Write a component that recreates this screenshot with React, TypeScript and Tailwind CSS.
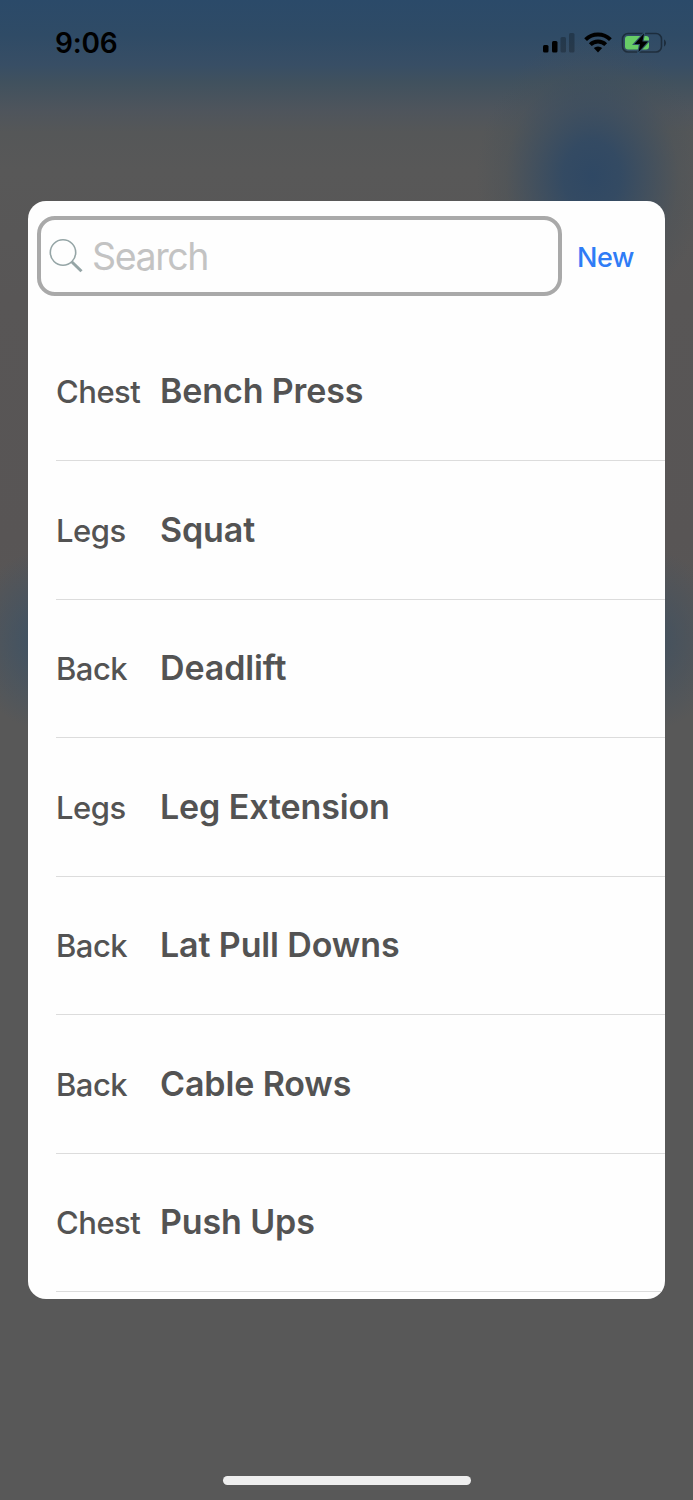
interface Exercise {
  group: string;
  name: string;
}

const exercises: Exercise[] = [
  { group: "Chest", name: "Bench Press" },
  { group: "Legs", name: "Squat" },
  { group: "Back", name: "Deadlift" },
  { group: "Legs", name: "Leg Extension" },
  { group: "Back", name: "Lat Pull Downs" },
  { group: "Back", name: "Cable Rows" },
  { group: "Chest", name: "Push Ups" },
];

function StatusBar() {
  return (
    <div className="flex h-[200px] items-start justify-between pt-[27px] pl-[55px] pr-[26px] text-black">
      <span className="text-[28px] leading-[32px] font-semibold tracking-[-0.2px]">9:06</span>
      <svg className="mt-[4px]" width="124" height="24" viewBox="0 0 124 24">
        {/* Signal */}
        <rect x="0" y="14" width="5.5" height="7.5" rx="1.5" />
        <rect x="9" y="10" width="5.5" height="11.5" rx="1.5" />
        <rect x="17.5" y="6" width="5.5" height="15.5" rx="1.5" opacity="0.25" />
        <rect x="26" y="2" width="5.5" height="19.5" rx="1.5" opacity="0.25" />
        {/* Wifi */}
        <g fill="none" stroke="#000" strokeWidth="4">
          <path d="M42.6 8.6a17.8 17.8 0 0 1 24.8 0" />
          <path d="M47.3 13.6a11 11 0 0 1 15.4 0" />
        </g>
        <path d="M55 21.4l-4.2-4.3a6 6 0 0 1 8.4 0z" />
        {/* Battery */}
        <rect x="79.5" y="2.5" width="39" height="18.5" rx="5.5" fill="none" stroke="#000" strokeOpacity="0.4" strokeWidth="1.6" />
        <path d="M121 8.5c2.7 1.3 2.7 5.7 0 7z" opacity="0.4" />
        <rect x="82" y="5" width="24" height="13.5" rx="3" fill="#68cd67" />
        <path d="M101 2.5L91.5 13h5.6l-1.6 8L105 10.5h-5.6z" stroke="#31506a" strokeWidth="2.2" />
        <path d="M101 2.5L91.5 13h5.6l-1.6 8L105 10.5h-5.6z" />
      </svg>
    </div>
  );
}

function SearchBar() {
  return (
    <div className="flex h-[122px] items-start pt-[15px] pl-[9px]">
      <div className="flex h-[80.5px] w-[525px] items-center rounded-[18px] border-[4.5px] border-[#a9a9a9] pl-[7px]">
        <svg className="mt-px" width="36" height="36" viewBox="0 0 36 36" fill="none" stroke="#95a5a6">
          <circle cx="15" cy="14.5" r="12.7" strokeWidth="1.6" />
          <path d="M23.7 23.7l9.8 9.6" strokeWidth="3" />
        </svg>
        <span className="mt-[2px] ml-[8px] text-[37.5px] leading-[44px] tracking-[-1.4px] text-[#c3c3c3]">Search</span>
      </div>
      <button className="ml-[15px] mt-[26px] text-[27px] leading-[32px] font-medium tracking-[-0.4px] text-[#2f7cf6]">New</button>
    </div>
  );
}

export default function App() {
  return (
    <div
      className="relative flex h-[1500px] w-[693px] flex-col overflow-hidden bg-[#585858] font-['Inter',sans-serif]"
    >
      {/* Dimmed page behind the dialog */}
      <div className="absolute inset-0 bg-[radial-gradient(ellipse_115px_140px_at_592px_176px,#2f4864_0%,#304964e6_25%,#3a4d60b3_50%,#4450594d_75%,transparent_100%),radial-gradient(ellipse_75px_90px_at_45px_640px,#3d5265_0%,transparent_100%),radial-gradient(ellipse_75px_90px_at_650px_640px,#42515f_0%,transparent_100%),linear-gradient(180deg,#2b4a69_0px,#2f4b66_35px,#384e65_65px,#40515e_82px,#4f555c_112px,#555758_132px,#585858_170px,#585656_300px,#585555_540px,#585858_700px)]" />
      <div className="relative flex flex-1 flex-col">
        <StatusBar />
        <div className="mx-[28px] mt-[0.5px] h-[1098.5px] overflow-hidden rounded-[18px] bg-[#fefefe]">
          <SearchBar />
          <ul className="pl-[28px] text-[#535353]">
            {exercises.map((exercise, i) => (
              <li key={i} className="flex h-[138.5px] items-center border-b border-[#dcdcdc]">
                <span className="mt-[2px] w-[104px] text-[31px] leading-[40px] font-[450] tracking-[-0.5px]">{exercise.group}</span>
                <span className="text-[34px] leading-[40px] font-semibold tracking-[-0.12px]">{exercise.name}</span>
              </li>
            ))}
          </ul>
        </div>
      </div>
      <div className="relative mb-[15px] h-[9px] w-[248px] self-center rounded-full bg-[#eeeeee]" />
    </div>
  );
}
